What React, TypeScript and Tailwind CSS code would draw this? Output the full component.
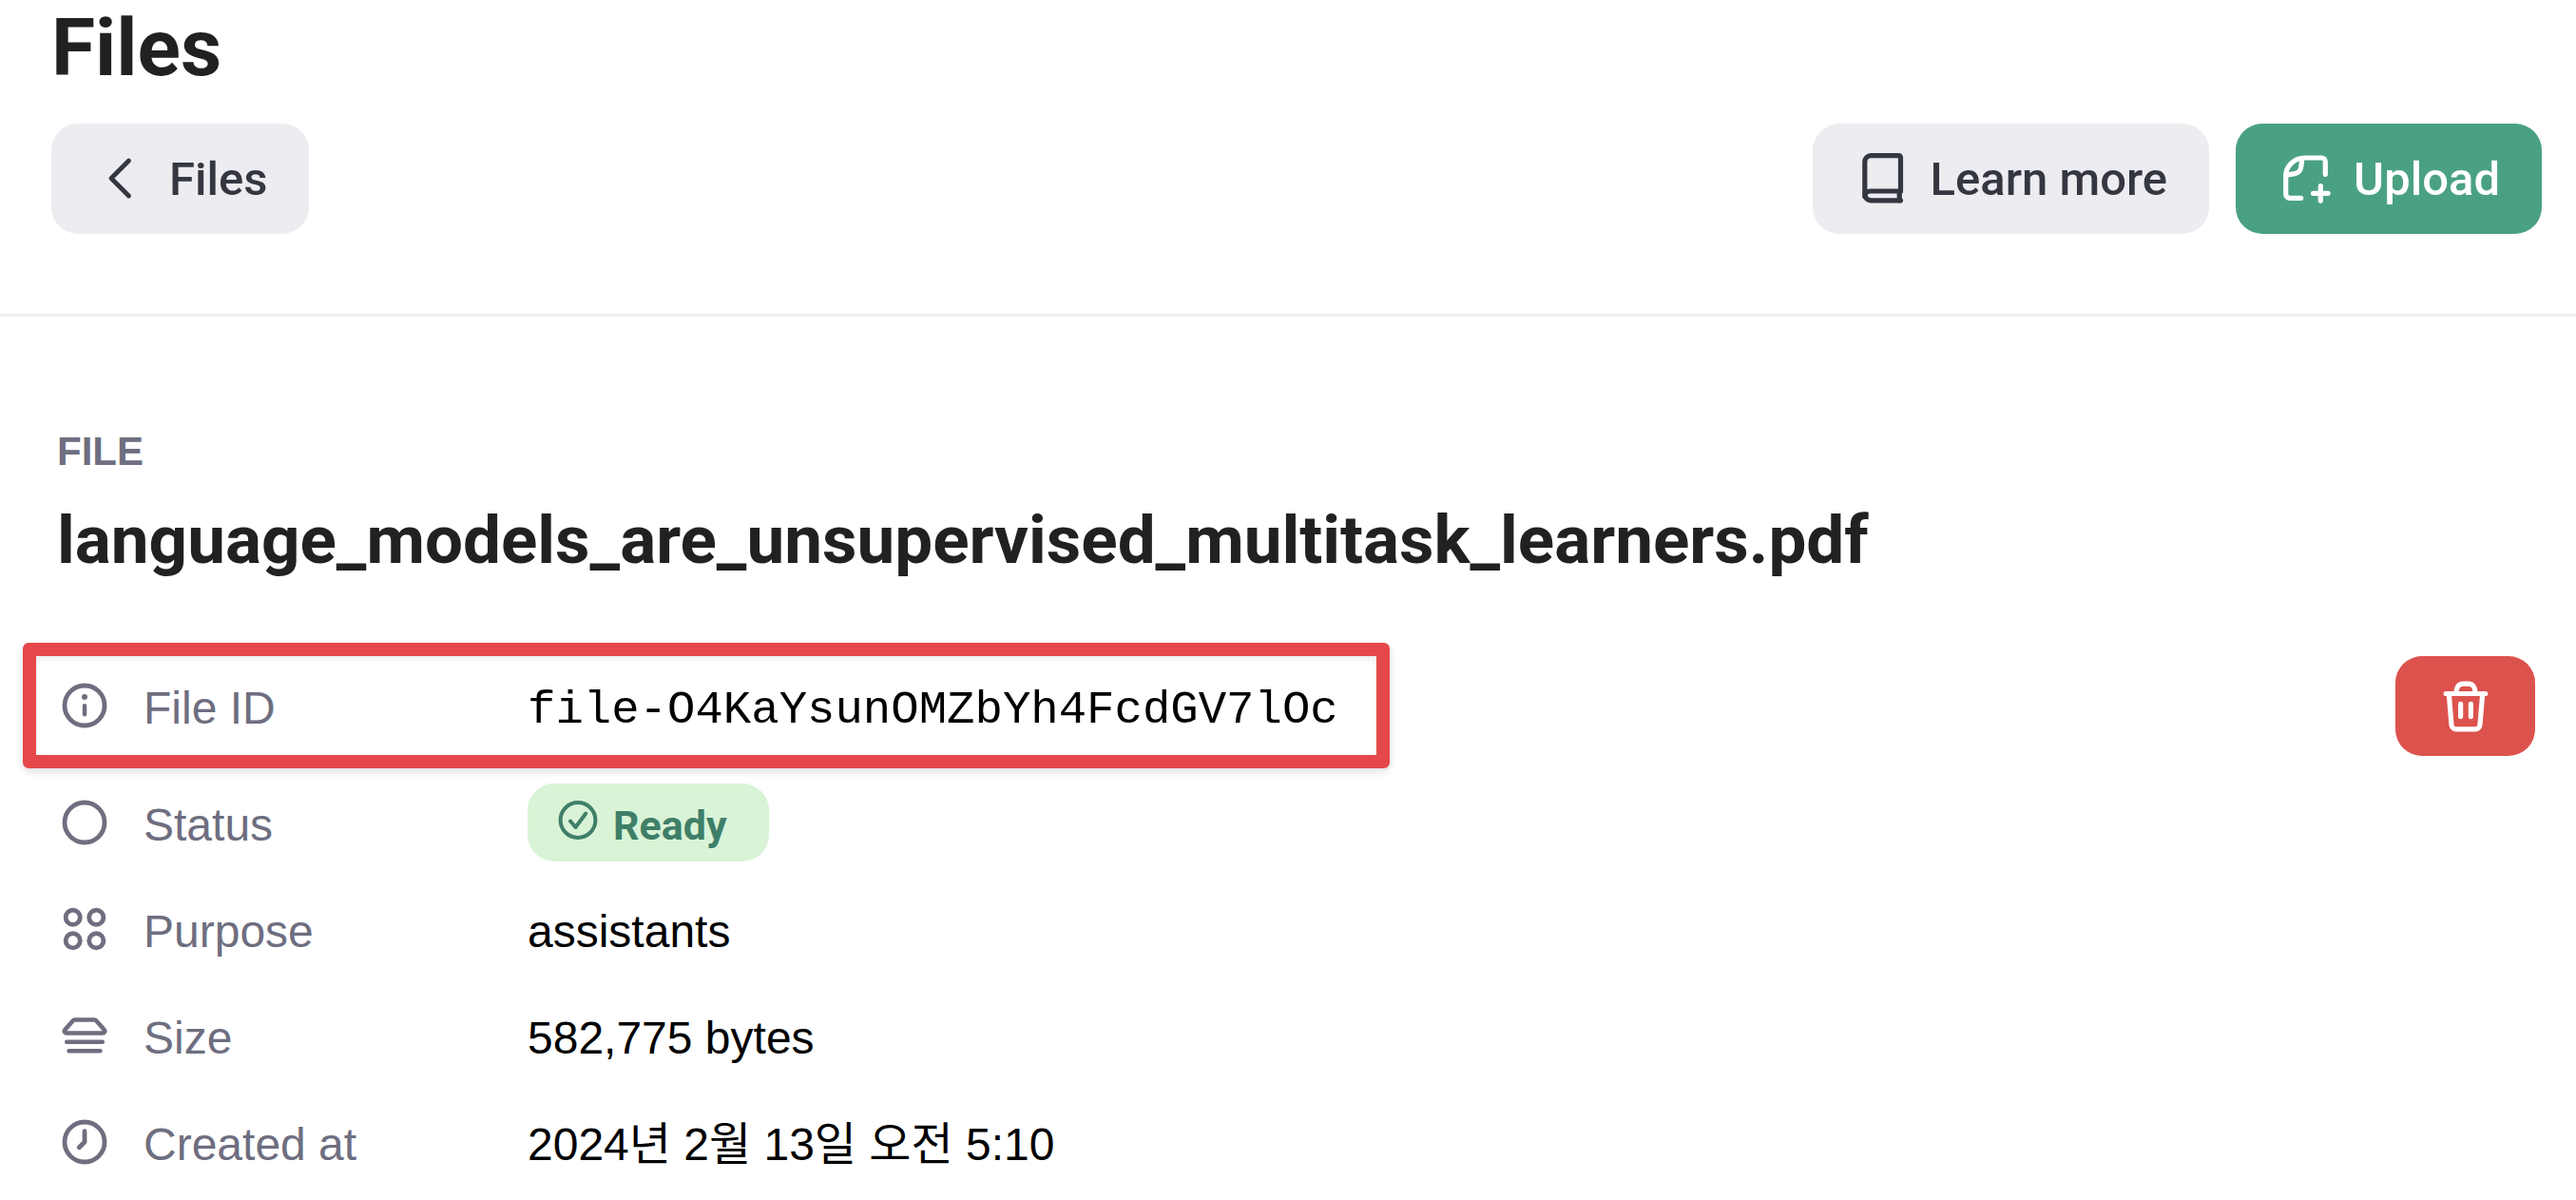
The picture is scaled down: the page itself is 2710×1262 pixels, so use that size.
import type { ReactNode } from "react";

function Icon({ children }: { children: ReactNode }) {
  return (
    <svg
      viewBox="0 0 56 56"
      className="size-14 shrink-0"
      fill="none"
      stroke="currentColor"
      strokeWidth={4.8}
      strokeLinecap="round"
      strokeLinejoin="round"
      aria-hidden="true"
    >
      {children}
    </svg>
  );
}

const ChevronIcon = () => (
  <Icon>
    <path d="M37.5 9 19 27.5 37.5 46" />
  </Icon>
);

const BookIcon = () => (
  <Icon>
    <g strokeWidth={5.2}>
      <path d="M48.5 50.8H17.2a6.4 6.4 0 0 1-6.4-6.4V10a6.4 6.4 0 0 1 6.4-6.4h29.3a2 2 0 0 1 2 2V41" />
      <path d="M10.8 46.5c0-3.5 2.5-5.5 6-5.5h31.7M47.2 41v9.8" />
    </g>
  </Icon>
);

const UploadIcon = () => (
  <Icon>
    <g strokeWidth={5.2}>
      <path d="M50.3 23.3V10a4 4 0 0 0-4-4H28.7c-11 0-20 8.5-20 19v19a4.3 4.3 0 0 0 4.3 4.3h11.7" />
      <path d="M25.8 6.5 24.8 15.5c-.6 4.5-2.8 6.5-6.8 7.1l-9 1.6" />
      <path d="M45.3 35.5v15.6M37.5 43.3h15.6" />
    </g>
  </Icon>
);

const TrashIcon = () => (
  <Icon>
    <g strokeWidth={5.2}>
      <path d="M7.2 14.5h41.6M18 14c0-6 2.500-9.8 7-9.8h6c4.5 0 7 3.8 7 9.8" />
      <path d="M10.3 14.5 13 47a5 5 0 0 0 5 4.9h20a5 5 0 0 0 5-4.9l2.7-32.5M22.6 25.4v13.2M33.4 25.4v13.2" />
    </g>
  </Icon>
);

const InfoIcon = () => (
  <Icon>
    <circle cx="28" cy="28" r="21" />
    <circle cx="28" cy="19" r="3" fill="currentColor" stroke="none" />
    <path d="M28 28.3v8.9" strokeWidth={4.5} />
  </Icon>
);

const CircleIcon = () => (
  <Icon>
    <circle cx="28" cy="28" r="21" />
  </Icon>
);

const DotsIcon = () => (
  <Icon>
    <circle cx="15.7" cy="15.7" r="7.6" />
    <circle cx="40.3" cy="15.7" r="7.6" />
    <circle cx="15.7" cy="40.3" r="7.6" />
    <circle cx="40.3" cy="40.3" r="7.6" />
  </Icon>
);

const StackIcon = () => (
  <Icon>
    <path
      strokeWidth={4.5}
      d="M17.6 11.6h20.8c.8 0 1.4.3 1.9.9l8.4 9.5c1.2 1.4.5 3.5-1.5 3.5H8.8c-2 0-2.7-2.1-1.5-3.5l8.4-9.5c.5-.6 1.1-.9 1.9-.9zM9.2 34.7h37.6M11.5 44.2h33"
    />
  </Icon>
);

const ClockIcon = () => (
  <Icon>
    <circle cx="28" cy="28" r="21" />
    <path d="M28 16.7V28l-5.7 5.8" />
  </Icon>
);

const ReadyIcon = () => (
  <svg
    viewBox="0 0 42 42"
    className="size-[42px] shrink-0 overflow-visible"
    fill="none"
    stroke="currentColor"
    strokeWidth={4}
    strokeLinecap="round"
    strokeLinejoin="round"
    aria-hidden="true"
  >
    <circle cx="21" cy="18.5" r="18.4" />
    <path d="M13 19.5l5.5 6.5L29.3 11.5" />
  </svg>
);

const button =
  "flex h-[116px] items-center gap-6 rounded-[28px] px-11 font-[Roboto,sans-serif] text-[49px] font-medium whitespace-nowrap";

function Label({ icon, children }: { icon: ReactNode; children: ReactNode }) {
  return (
    <dt className="flex w-[494px] shrink-0 items-center gap-[34px] text-[#6e6e80]">
      {icon}
      <span className="pt-1.5">{children}</span>
    </dt>
  );
}

function Row({ icon, label, children }: { icon: ReactNode; label: string; children: ReactNode }) {
  return (
    <div className="flex h-28 items-center pl-[37px]">
      <Label icon={icon}>{label}</Label>
      <dd>{children}</dd>
    </div>
  );
}

export default function App() {
  return (
    <div className="min-h-screen bg-white font-['Liberation_Sans','Noto_Sans_CJK_KR',sans-serif] text-[48px] leading-[60px] text-black">
      <header className="border-b-[3px] border-[#ececf1] pr-9 pb-[84px] pl-[54px]">
        <h1 className="font-[Roboto,sans-serif] text-[84px] leading-[102px] font-bold text-[#202123]">Files</h1>
        <div className="mt-7 flex items-center justify-between">
          <button type="button" className={`${button} bg-[#ececf1] text-[#353740]`}>
            <ChevronIcon />
            <span className="pt-0.5">Files</span>
          </button>
          <div className="flex gap-7">
            <button type="button" className={`${button} bg-[#ececf1] text-[#353740]`}>
              <BookIcon />
              <span className="pt-0.5">Learn more</span>
            </button>
            <button type="button" className={`${button} bg-[#4aa181] text-white`}>
              <UploadIcon />
              <span className="pt-0.5">Upload</span>
            </button>
          </div>
        </div>
      </header>

      <main className="pt-[117px]">
        <div className="pl-[60px]">
          <p className="text-[42px] leading-[50px] font-bold text-[#6e6e80]">FILE</p>
          <h2 className="mt-[26px] font-[Roboto,sans-serif] text-[71px] leading-[84px] font-bold text-[#202123]">
            language_models_are_unsupervised_multitask_learners.pdf
          </h2>
        </div>

        <div className="mt-[66px] flex items-start justify-between pr-[43px] pl-6">
          <dl>
            <div className="mb-px flex h-[132px] w-fit items-center rounded-md border-[14px] border-[#e5484a] pr-10 pl-[23px] shadow-[0_3px_8px_rgba(0,0,0,0.14),inset_0_3px_6px_rgba(0,0,0,0.08)]">
              <Label icon={<InfoIcon />}>File ID</Label>
              <dd className="pt-2.5 font-['Liberation_Mono',monospace] text-[49px]">file-O4KaYsunOMZbYh4FcdGV7lOc</dd>
            </div>
            <Row icon={<CircleIcon />} label="Status">
              <span className="flex h-[82px] items-center gap-4 rounded-[28px] bg-[#d9f3d6] pr-11 pl-8 font-[Roboto,sans-serif] text-[43px] font-bold text-[#3f7f68]">
                <ReadyIcon />
                <span className="pt-1.5">Ready</span>
              </span>
            </Row>
            <Row icon={<DotsIcon />} label="Purpose">
              <span className="block pt-1.5">assistants</span>
            </Row>
            <Row icon={<StackIcon />} label="Size">
              <span className="block pt-1.5">582,775 bytes</span>
            </Row>
            <Row icon={<ClockIcon />} label="Created at">
              <time dateTime="2024-02-13T05:10" lang="ko" className="block pt-1.5">
                2024년 2월 13일 오전 5:10
              </time>
            </Row>
          </dl>
          <button
            type="button"
            aria-label="Delete file"
            className="mt-3.5 flex h-[105px] w-[147px] items-center justify-center rounded-[28px] bg-[#dc524d] text-white"
          >
            <TrashIcon />
          </button>
        </div>
      </main>
    </div>
  );
}
